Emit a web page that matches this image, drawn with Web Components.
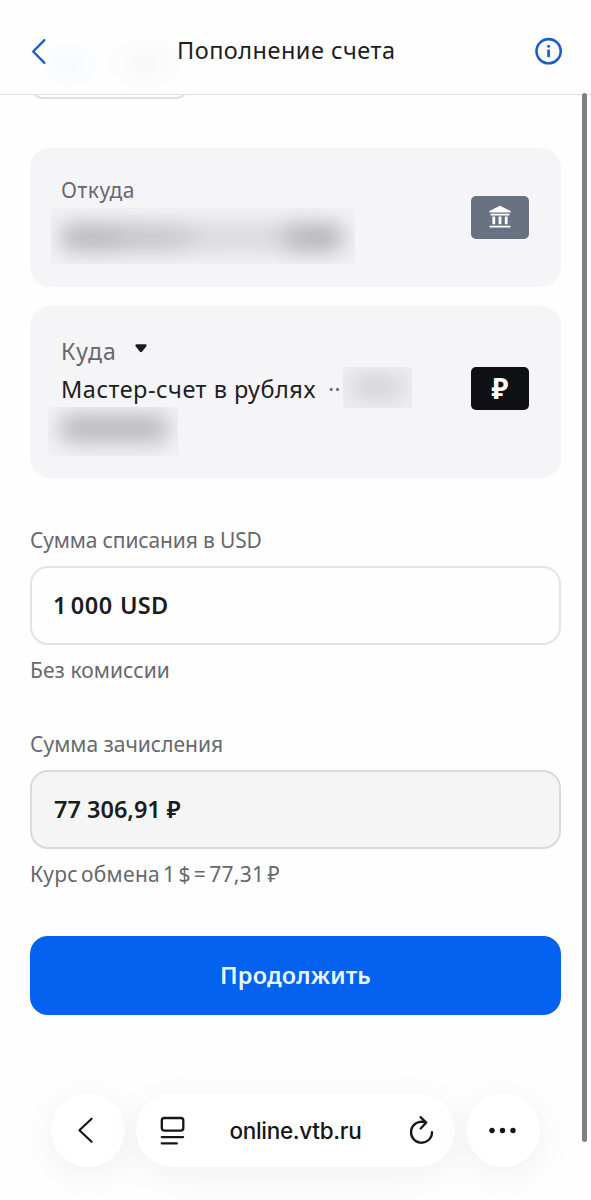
<!DOCTYPE html>
<html lang="ru">
<head>
<meta charset="utf-8">
<title>Пополнение счета</title>
<style>
html, body { margin: 0; height: 1200px; overflow: hidden; background: #fefefe; }
body { font-family: "Noto Sans", "Liberation Sans", sans-serif; color: #1d1e22; }
</style>
</head>
<body>
<transfer-page></transfer-page>
<script>
const define = (name, html) => {
  const t = document.createElement('template');
  t.innerHTML = html;
  customElements.define(name, class extends HTMLElement {
    constructor() {
      super();
      this.attachShadow({ mode: 'open' }).append(t.content.cloneNode(true));
    }
  });
};

define('page-header', `
<style>
:host { display: grid; grid-template-columns: 146px 1fr 28px; box-sizing: border-box; height: 95px; padding: 8px 28px 0 31px; align-items: center; border-bottom: 1.5px solid #e0e0e1;
  background: radial-gradient(ellipse 34px 26px at 70px 65px, #f6f9fe, transparent), radial-gradient(ellipse 44px 30px at 145px 63px, #f8f8f9, transparent), #fefefe; }
svg { display: block; fill: none; stroke: #1a5fc8; }
h1 { margin: 0 0 2px; font-size: 23.5px; line-height: 32px; font-weight: 400; letter-spacing: var(--ls-title); white-space: nowrap; }
</style>
<svg width="16" height="28" viewBox="0 0 16 28" stroke-width="2.4" stroke-linecap="round" stroke-linejoin="round"><path d="M13.4 3.2 2.2 14.5 13.4 25.8"/></svg>
<h1><slot></slot></h1>
<svg width="28" height="28" viewBox="0 0 28 28" stroke-width="2.6"><circle cx="13.6" cy="14.2" r="12.1"/><path d="M13.6 12.6v7.6" stroke-width="2.7"/><circle cx="13.6" cy="9.2" r="1.5" fill="#1a5fc8" stroke="none"/></svg>`);

define('cut-field', `
<style>:host { display: block; box-sizing: border-box; width: 157px; height: 4px; overflow: hidden; }
div { box-sizing: border-box; height: 24px; margin-top: -20px; border: 2px solid #dfdfe1; border-radius: 12px; }</style><div></div>`);

define('masked-value', `
<style>
:host { display: block; overflow: hidden; flex: none; background: #f3f3f5; }
div { display: flex; height: 100%; box-sizing: border-box; align-items: center; padding: var(--pad); filter: blur(var(--blur, 11px)); }
i { height: var(--h, 22px); border-radius: 8px; flex: 1; background: var(--bar); }
</style><div><i></i></div>`);

define('account-card', `
<style>
:host { display: flex; box-sizing: border-box; width: 531px; padding: 0 32px 0 31px; border-radius: 20px; background: #f5f5f8; justify-content: space-between; }
.text { min-width: 0; }
::slotted([slot=badge]) { margin-top: var(--badge-top); }
</style>
<div class="text"><slot></slot></div><slot name="badge"></slot>`);

define('account-badge', `
<style>:host { display: flex; width: 58px; height: 43px; flex: none; border-radius: 5px; align-items: center; justify-content: center; background: var(--bg); color: #fff; font-size: 28px; line-height: 41px; font-weight: 700; }
</style><slot></slot>`);

define('bank-icon', `
<style>:host, svg { display: block; } svg { margin-bottom: 2px; }</style>
<svg width="22" height="24" viewBox="0 0 22 24" fill="#fff"><path d="M11 .8 21.6 6v1.6H.4V6zM1.6 8.8h18.8v1.8H1.6zM3.4 11.4h2.8v7.8H3.4zM9.6 11.4h2.8v7.8H9.6zM15.8 11.4h2.8v7.8h-2.8zM.6 20.8h20.8v1.8H.6z"/></svg>`);

define('amount-field', `
<style>
:host { display: block; font-size: 21px; line-height: 30px; color: #67686c; white-space: nowrap; }
.box { box-sizing: border-box; width: 531px; height: 79px; margin: 11px 0 10px; padding: 0 22px; border: 2px solid var(--line, #e4e4e6); border-radius: 18px; background: var(--fill, #fefefe); color: #1b1c20; font-size: 23.5px; line-height: 75px; font-weight: 600; }
</style>
<slot name="label"></slot><div class="box"><slot></slot></div><slot name="hint"></slot>`);

define('primary-button', `
<style>
:host { display: block; }
button { display: block; width: 531px; height: 79px; padding: 0; border: 0; border-radius: 18px; background: #0561ef; color: #e9f8ff; font: 600 23.5px/77px "Noto Sans", sans-serif; letter-spacing: var(--ls-button); }
</style><button><slot></slot></button>`);

define('browser-bar', `
<style>
:host { display: flex; gap: 11.5px; padding-left: 51px; height: 74px; }
.c { width: 73.5px; border-radius: 37px; background: #fff; display: flex; align-items: center; justify-content: center; box-shadow: 0 8px 38px rgba(0,0,0,.06); flex: none; }
.pill { width: 319px; box-sizing: border-box; padding: 0 21px 0 23px; }
.pill span { margin: 2px auto 0 44.5px; }
svg { display: block; fill: none; stroke: #161616; stroke-linecap: round; stroke-linejoin: round; }
span { font: 500 22.5px/30px Inter, sans-serif; color: #161616; letter-spacing: var(--ls-url); }
.back { margin-right: 4px; }
</style>
<div class="c"><svg class="back" width="20" height="28" viewBox="0 0 20 28" stroke-width="2.2"><path d="M15.6 2.8 3.4 14.3 15.6 25.8"/></svg></div>
<div class="c pill">
<svg width="26" height="30" viewBox="0 0 26 30" stroke-width="2.3"><rect x="2.8" y="3" width="21.5" height="12.6" rx="2.6"/><path d="M2.8 22.1h21.3M2.8 28.4h15"/></svg>
<span><slot></slot></span>
<svg width="26" height="30" viewBox="0 0 26 30" stroke-width="2.3"><path d="M24 17.2A10.5 10.5 0 1 1 16.5 7.2M12.5 2.2l5.8 5.3-5.6 6"/></svg>
</div>
<div class="c"><svg width="30" height="10" viewBox="0 0 30 10"><g fill="#161616" stroke="none"><circle cx="4" cy="5.5" r="2.7"/><circle cx="14.5" cy="5.5" r="2.7"/><circle cx="25" cy="5.5" r="2.7"/></g></svg></div>`);

define('transfer-page', `
<style>
:host { display: block; position: relative; width: 591px; height: 1200px; overflow: hidden; --ls-title: .48px; --ls-button: .12px; --ls-url: -.31px; }
main { padding-left: 30px; }
cut-field { margin-left: 31px; }
.from { height: 138.5px; --badge-top: 48px; }
.to { height: 172px; margin-top: 19.5px; --badge-top: 61px; }
.lab { font-size: 21px; line-height: 28px; color: #67686c; margin-top: 28px; letter-spacing: .5px; }
.m1 { width: 304px; height: 56px; margin: 4px 0 0 -10px; --pad: 2px 12px 0 10px; --h: 27px; --bar: linear-gradient(90deg, #b6b6b8 0 50px, #c3c3c5 70px 110px, #d8d8da 145px 215px, #b0b0b2 235px); }
.kuda { display: flex; align-items: flex-start; gap: 18px; margin-top: 31px; font-size: 23px; line-height: 28px; color: #67686c; letter-spacing: 1.15px; }
.kuda svg { margin-top: 7px; }
.row { display: flex; height: 41px; margin-top: 1.5px; font-size: 23.5px; line-height: 44px; white-space: nowrap; }
.row span:first-child { letter-spacing: .5px; }
.dots { margin-left: 12px; width: 15px; color: #6c6d71; }
.m2 { width: 69px; height: 41px; background: #efeff1; --pad: 0 8px; --h: 24px; --blur: 11px; --bar: #d2d2d4; }
.m3 { width: 130px; height: 49px; margin: -1px 0 0 -13px; --pad: 0 10px 6px 12px; --h: 27px; --bar: #b6b6b8; }
.a1 { margin-top: 47px; }
.a1 [slot=label] { letter-spacing: -.15px; }
.a1 [slot=hint] { letter-spacing: .06px; }
.a1 b { font-weight: inherit; word-spacing: -2.6px; letter-spacing: .45px; margin-left: -1px; }
.a1 em { font-style: normal; letter-spacing: .3px; margin-left: 1px; }
.a2 { margin-top: 44px; --fill: #f5f5f6; --line: #dadadc; }
.a2 [slot=hint] { letter-spacing: .3px; word-spacing: -2.7px; }
primary-button { margin-top: 47px; }
browser-bar { margin-top: 78px; }
.scroll { position: absolute; left: 582px; top: 93px; width: 5px; height: 1049px; border-radius: 2.5px; background: #808080; }
</style>
<page-header>Пополнение счета</page-header>
<cut-field></cut-field>
<main>
<account-card class="from" style="margin-top:49px">
  <div class="lab">Откуда</div><masked-value class="m1"></masked-value>
  <account-badge slot="badge" style="--bg:#697283"><bank-icon></bank-icon></account-badge>
</account-card>
<account-card class="to">
  <div class="kuda"><span>Куда</span><svg width="12" height="9" viewBox="0 0 12 9"><path d="M1.5.3h9Q12 .3 11.6 2L7.2 7.5Q6 8.8 4.8 7.5L.4 2Q0 .3 1.5.3z" fill="#1b1c20"/></svg></div>
  <div class="row"><span>Мастер-счет в рублях</span><span class="dots">··</span><masked-value class="m2"></masked-value></div>
  <masked-value class="m3"></masked-value>
  <account-badge slot="badge" style="--bg:#101115">₽</account-badge>
</account-card>
<amount-field class="a1"><span slot="label">Сумма списания в USD</span><b>1 000</b><em> USD</em><span slot="hint">Без комиссии</span></amount-field>
<amount-field class="a2"><span slot="label">Сумма зачисления</span>77 306,91 ₽<span slot="hint">Курс обмена 1 $ = 77,31 ₽</span></amount-field>
<primary-button>Продолжить</primary-button>
</main>
<browser-bar>online.vtb.ru</browser-bar>
<div class="scroll"></div>`);
</script>
</body>
</html>
